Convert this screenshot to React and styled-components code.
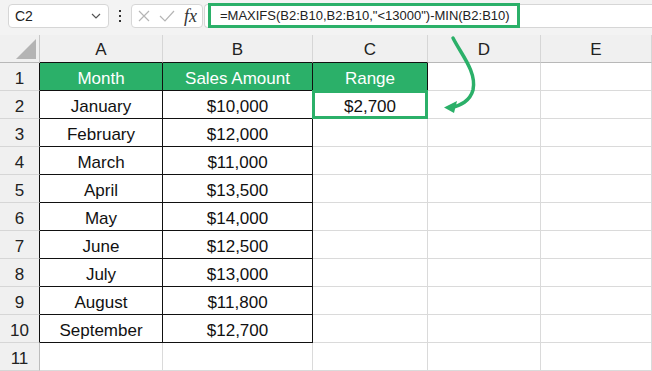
import React from 'react'
import styled, { createGlobalStyle } from 'styled-components'

const GREEN = '#2bb069'

const GlobalStyle = createGlobalStyle`
  html, body {
    margin: 0;
    padding: 0;
    background: #f3f3f3;
  }
  body {
    font-family: "Liberation Sans", Arial, sans-serif;
  }
`

const Page = styled.div`
  position: relative;
  width: 652px;
  height: 371px;
  overflow: hidden;
  background: #f3f3f3;
`

const Toolbar = styled.div`
  height: 35px;
  display: flex;
  align-items: flex-start;
  padding: 4px 0 0 8px;
  box-sizing: border-box;
`

const NameBox = styled.div`
  width: 101px;
  height: 24px;
  box-sizing: border-box;
  background: #fff;
  border: 1px solid #d6d6d6;
  border-radius: 4px;
  display: flex;
  align-items: center;
  justify-content: space-between;
  padding: 0 6px 0 6px;
  font-size: 14px;
  color: #222;
`

const Dots = styled.div`
  width: 22px;
  height: 24px;
  display: flex;
  flex-direction: column;
  align-items: center;
  justify-content: center;
  gap: 3px;

  span {
    width: 2px;
    height: 2px;
    background: #333;
  }
`

const FxBox = styled.div`
  width: 72px;
  height: 24px;
  box-sizing: border-box;
  background: #fff;
  border: 1px solid #d6d6d6;
  border-radius: 4px;
  display: flex;
  align-items: center;
  gap: 8px;
  padding: 0 4px 0 5px;
`

const Fx = styled.span`
  font-family: "Liberation Serif", "Times New Roman", serif;
  font-style: italic;
  font-size: 18px;
  color: #333;
  margin-left: 1px;
`

const FormulaBar = styled.div`
  flex: 1;
  height: 24px;
  margin-left: 1px;
  box-sizing: border-box;
  background: #fff;
  border: 1px solid #d6d6d6;
  border-right: none;
  border-radius: 4px 0 0 4px;
  display: flex;
  align-items: center;
`

const Formula = styled.div`
  width: 312px;
  height: 25px;
  margin: -2px 0 0 3px;
  box-sizing: border-box;
  border: 3px solid ${GREEN};
  display: flex;
  align-items: center;
  padding-left: 9px;
  font-size: 13px;
  color: #222;
  white-space: nowrap;
`

const Grid = styled.div`
  display: grid;
  grid-template-columns: 40px 123px 150px 115px 113px 111px;
  grid-auto-rows: 28px;
`

const Corner = styled.div`
  position: relative;
  background: #f0f0f0;
  border-right: 1px solid #c8c8c8;
  border-bottom: 1px solid #b8b8b8;

  &::after {
    content: '';
    position: absolute;
    right: 3px;
    bottom: 3px;
    width: 0;
    height: 0;
    border-left: 20px solid transparent;
    border-bottom: 20px solid #b4b4b4;
  }
`

const ColHead = styled.div`
  background: #f0f0f0;
  border-right: 1px solid #d6d6d6;
  border-bottom: 1px solid ${(p) => (p.$table ? '#111' : '#b8b8b8')};
  display: flex;
  align-items: center;
  justify-content: center;
  font-size: 17px;
  color: #222;
  padding-top: 3px;
  box-sizing: border-box;
`

const RowHead = styled.div`
  background: #f0f0f0;
  border-right: 1px solid ${(p) => (p.$table ? '#111' : '#bdbdbd')};
  border-bottom: 1px solid #d6d6d6;
  display: flex;
  align-items: center;
  justify-content: center;
  font-size: 17px;
  color: #222;
  padding-top: 4px;
  box-sizing: border-box;
`

const Cell = styled.div`
  position: relative;
  background: ${(p) => (p.$head ? GREEN : '#fff')};
  color: ${(p) => (p.$head ? '#fff' : '#111')};
  border-right: 1px solid ${(p) => (p.$table ? '#111' : '#dadada')};
  border-bottom: 1px solid ${(p) => (p.$table ? '#111' : '#dadada')};
  display: flex;
  align-items: center;
  justify-content: center;
  font-size: 17px;
  padding-top: 4px;
  box-sizing: border-box;

  ${(p) =>
    p.$selected &&
    `
    &::after {
      content: '';
      position: absolute;
      left: -1px;
      top: -1px;
      right: -1px;
      bottom: -1px;
      border: 3px solid ${GREEN};
    }
  `}
`

const Arrow = styled.svg`
  position: absolute;
  left: 0;
  top: 0;
  pointer-events: none;
`

const data = [
  ['January', '$10,000'],
  ['February', '$12,000'],
  ['March', '$11,000'],
  ['April', '$13,500'],
  ['May', '$14,000'],
  ['June', '$12,500'],
  ['July', '$13,000'],
  ['August', '$11,800'],
  ['September', '$12,700'],
]

const cols = ['A', 'B', 'C', 'D', 'E']

export default function App() {
  const rows = []

  // header row of the table
  rows.push(
    <React.Fragment key="r1">
      <RowHead $table>1</RowHead>
      <Cell $head $table>Month</Cell>
      <Cell $head $table>Sales Amount</Cell>
      <Cell $head $table>Range</Cell>
      <Cell />
      <Cell />
    </React.Fragment>
  )

  data.forEach(([month, amount], i) => {
    const n = i + 2
    rows.push(
      <React.Fragment key={n}>
        <RowHead $table>{n}</RowHead>
        <Cell $table>{month}</Cell>
        <Cell $table>{amount}</Cell>
        <Cell $selected={n === 2}>{n === 2 ? '$2,700' : ''}</Cell>
        <Cell />
        <Cell />
      </React.Fragment>
    )
  })

  rows.push(
    <React.Fragment key="r11">
      <RowHead>11</RowHead>
      <Cell />
      <Cell />
      <Cell />
      <Cell />
      <Cell />
    </React.Fragment>
  )

  return (
    <Page>
      <GlobalStyle />
      <Toolbar>
        <NameBox>
          <span>C2</span>
          <svg width="12" height="12" viewBox="0 0 12 12">
            <path d="M2 4 L6 8 L10 4" fill="none" stroke="#555" strokeWidth="1.2" />
          </svg>
        </NameBox>
        <Dots>
          <span />
          <span />
          <span />
        </Dots>
        <FxBox>
          <svg width="14" height="14" viewBox="0 0 14 14">
            <path d="M2 2 L12 12 M12 2 L2 12" stroke="#b5b5b5" strokeWidth="1.2" />
          </svg>
          <svg width="16" height="14" viewBox="0 0 16 14">
            <path d="M1 7 L6 12 L15 2" fill="none" stroke="#b5b5b5" strokeWidth="1.2" />
          </svg>
          <Fx>fx</Fx>
        </FxBox>
        <FormulaBar>
          <Formula>=MAXIFS(B2:B10,B2:B10,"&lt;13000")-MIN(B2:B10)</Formula>
        </FormulaBar>
      </Toolbar>
      <Grid>
        <Corner />
        {cols.map((c, i) => (
          <ColHead key={c} $table={i < 3}>
            {c}
          </ColHead>
        ))}
        {rows}
      </Grid>
      <Arrow width="652" height="371" viewBox="0 0 652 371">
        <path
          d="M453 38 C 461 54, 477 72, 473 90 C 470 101, 460 106, 452 107"
          fill="none"
          stroke={GREEN}
          strokeWidth="3.5"
          strokeLinecap="round"
        />
        <path d="M444 107.5 L457 101 L454 113 Z" fill={GREEN} />
      </Arrow>
    </Page>
  )
}
